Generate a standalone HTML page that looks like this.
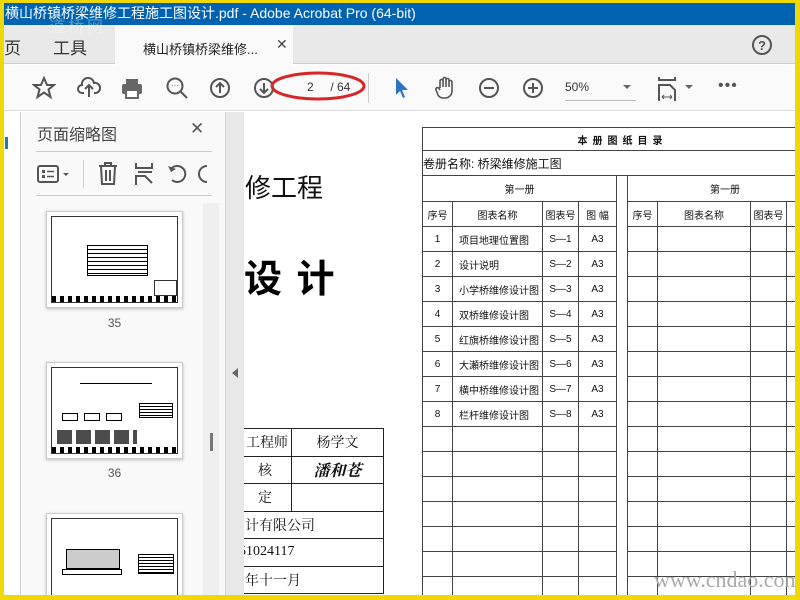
<!DOCTYPE html>
<html><head><meta charset="utf-8"><style>
*{margin:0;padding:0;box-sizing:border-box}
body{width:800px;height:600px;overflow:hidden;background:#f0d800;font-family:"Liberation Sans","Noto Sans CJK SC",sans-serif;position:relative}
.a{position:absolute}
#win{left:4px;top:3px;width:791px;height:592px;background:#fff;overflow:hidden}
#title{left:0;top:0;width:791px;height:22px;background:#0063b1;color:#fff;font-size:14px;line-height:20px;padding-left:1px;white-space:nowrap}
#tabs{left:0;top:22px;width:791px;height:39px;background:#e9e9e9;border-bottom:1px solid #cfcfcf}
#tb{left:0;top:62px;width:791px;height:46px;background:#fafafa;border-bottom:1px solid #ddd}
.ic{stroke:#555;fill:none;stroke-width:2}
table{border-collapse:collapse;table-layout:fixed;font-size:10px;color:#111}
td{border:1px solid #444;text-align:center;height:25px;padding:0;white-space:nowrap;overflow:hidden}
.st td{border:1px solid #222;height:27.5px;font-size:14px;font-family:"Liberation Serif","Noto Serif CJK SC",serif}
.thumb{position:absolute;left:42px;width:137px;background:#fff;border:1px solid #ccc;box-shadow:0 1px 3px rgba(0,0,0,.25)}
.thumb .in{position:absolute;left:4px;top:4px;right:4px;bottom:4px;border:1px solid #333}
.lbl{position:absolute;left:42px;width:137px;text-align:center;font-size:12px;color:#555}
</style></head><body>
<div id="win" class="a">
<div id="title" class="a">横山桥镇桥梁维修工程施工图设计.pdf - Adobe Acrobat Pro (64-bit)</div>
<div id="tabs" class="a">
 <div class="a" style="left:0;top:9px;font-size:17px;color:#333">页</div>
 <div class="a" style="left:49px;top:9px;font-size:17px;color:#333">工具</div>
 <div class="a" style="left:111px;top:0;width:178px;height:40px;background:#fafafa"></div>
 <div class="a" style="left:139px;top:14px;font-size:13px;color:#222">横山桥镇桥梁维修...</div>
 <div class="a" style="left:272px;top:11px;font-size:14px;color:#444">✕</div>
 <svg class="a" style="left:747px;top:9px" width="22" height="22"><circle cx="11" cy="11" r="9" class="ic"/><text x="11" y="16" font-size="13" text-anchor="middle" fill="#555" font-family="Liberation Sans" font-weight="bold">?</text></svg>
</div>
<div id="tb" class="a">
 <svg class="a" style="left:28px;top:11px" width="24" height="24"><polygon points="12,2 15,9 22,9 16.5,13.5 18.5,21 12,16.5 5.5,21 7.5,13.5 2,9 9,9" class="ic"/></svg>
 <svg class="a" style="left:73px;top:12px" width="24" height="22"><path d="M7 16 H5 A4 4 0 0 1 5 8 A6 6 0 0 1 17 6 A4.5 4.5 0 0 1 19 16 H17 M12 20 V9 M8 12 L12 8 L16 12" class="ic"/></svg>
 <svg class="a" style="left:116px;top:12px" width="24" height="22"><rect x="6" y="2" width="12" height="5" fill="#666"/><rect x="2" y="7" width="20" height="10" rx="2" fill="#666"/><rect x="6" y="13" width="12" height="8" fill="#fff" stroke="#666" stroke-width="2"/></svg>
 <svg class="a" style="left:161px;top:11px" width="24" height="24"><circle cx="10" cy="10" r="7.5" class="ic"/><path d="M15.5 15.5 L22 22" class="ic" stroke-width="3"/><text x="10" y="12" font-size="8" text-anchor="middle" fill="#555">···</text></svg>
 <svg class="a" style="left:205px;top:12px" width="22" height="22"><circle cx="11" cy="11" r="9" class="ic"/><path d="M11 16 V6 M7 10 L11 6 L15 10" class="ic"/></svg>
 <svg class="a" style="left:249px;top:12px" width="22" height="22"><circle cx="11" cy="11" r="9" class="ic"/><path d="M11 6 V16 M7 12 L11 16 L15 12" class="ic"/></svg>
 <svg class="a" style="left:264px;top:4px" width="100" height="34"><ellipse cx="50" cy="17" rx="46" ry="13" fill="none" stroke="#d8252a" stroke-width="3"/></svg>
 <div class="a" style="left:303px;top:15px;font-size:12px;color:#333">2&nbsp;&nbsp;&nbsp;&nbsp; / 64</div>
 <div class="a" style="left:364px;top:8px;width:1px;height:30px;background:#ccc"></div>
 <svg class="a" style="left:390px;top:12px" width="16" height="22"><path d="M2 1 L2 18 L6 14 L9 21 L11 20 L8 13 L14 13 Z" fill="#2a73c8"/></svg>
 <svg class="a" style="left:430px;top:10px" width="24" height="26"><path d="M6 13 V6 a1.5 1.5 0 0 1 3 0 V12 V4 a1.5 1.5 0 0 1 3 0 V12 V5 a1.5 1.5 0 0 1 3 0 V12 V7 a1.5 1.5 0 0 1 3 0 V16 a7 7 0 0 1 -7 7 h-2 a6 6 0 0 1 -5 -3 L2 15 a1.5 1.5 0 0 1 3 -1.5 L6 15" fill="none" stroke="#555" stroke-width="1.6"/></svg>
 <svg class="a" style="left:474px;top:12px" width="22" height="22"><circle cx="11" cy="11" r="9" class="ic"/><path d="M6 11 H16" class="ic"/></svg>
 <svg class="a" style="left:518px;top:12px" width="22" height="22"><circle cx="11" cy="11" r="9" class="ic"/><path d="M6 11 H16 M11 6 V16" class="ic"/></svg>
 <div class="a" style="left:561px;top:15px;font-size:12px;color:#333">50%</div>
 <div class="a" style="left:561px;top:35px;width:71px;height:1px;background:#bbb"></div>
 <div class="a" style="left:619px;top:20px;width:0;height:0;border-left:4px solid transparent;border-right:4px solid transparent;border-top:4px solid #666"></div>
 <svg class="a" style="left:654px;top:10px" width="20" height="28"><path d="M1 2 V5 H17 V2" fill="none" stroke="#555" stroke-width="2"/><path d="M1 26 V10 H12 L17 15 V26" fill="none" stroke="#555" stroke-width="2"/><path d="M4 22 H14 M4 22 l2 -2 M4 22 l2 2 M14 22 l-2 -2 M14 22 l-2 2" stroke="#555" fill="none"/></svg>
 <div class="a" style="left:681px;top:20px;width:0;height:0;border-left:4px solid transparent;border-right:4px solid transparent;border-top:4px solid #666"></div>
 <div class="a" style="left:714px;top:12px;font-size:16px;color:#555;letter-spacing:1px">•••</div>
</div>
<div class="a" style="left:0;top:109px;width:17px;height:483px;background:#fff;border-right:1px solid #ccc"></div>
<div class="a" style="left:1px;top:134px;width:3px;height:12px;background:#2a73c8"></div>
<div class="a" style="left:18px;top:109px;width:203px;height:483px;background:#f9f9f9"></div>
<div class="a" style="left:33px;top:118px;font-size:16px;color:#444">页面缩略图</div>
<div class="a" style="left:186px;top:116px;font-size:17px;color:#555">✕</div>
<div class="a" style="left:32px;top:148px;width:176px;height:1px;background:#ccc"></div>
<svg class="a" style="left:33px;top:161px" width="36" height="22"><rect x="1" y="2" width="20" height="16" rx="2" class="ic" stroke-width="1.8"/><rect x="5" y="6" width="3" height="3" fill="#555"/><rect x="5" y="11" width="3" height="3" fill="#555"/><path d="M10 7.5 H17 M10 12.5 H17" stroke="#555" stroke-width="1.5"/><path d="M26 9 L32 9 L29 12 Z" fill="#555"/></svg>
<div class="a" style="left:79px;top:157px;width:1px;height:28px;background:#ccc"></div>
<svg class="a" style="left:92px;top:158px" width="24" height="26"><path d="M3 5 H21 M9 5 V2 H15 V5 M5 5 L6 23 H18 L19 5 M10 9 V20 M14 9 V20" class="ic" stroke-width="1.8"/></svg>
<svg class="a" style="left:130px;top:159px" width="20" height="24"><path d="M2 1 V6 H18 V1 M2 23 V14 H11 L18 21 M4 10 H18" fill="none" stroke="#555" stroke-width="2"/></svg>
<svg class="a" style="left:162px;top:160px" width="22" height="22"><path d="M6 17 A8 8 0 1 0 5 6" class="ic" stroke-width="2.5"/><path d="M2 3 L5 9 L10 6 Z" fill="#555"/></svg>
<svg class="a" style="left:193px;top:160px" width="10" height="22"><path d="M10 3 A8 8 0 0 0 10 19" class="ic" stroke-width="2.5"/></svg>
<div class="a" style="left:32px;top:192px;width:176px;height:1px;background:#ccc"></div>
<div class="a" style="left:199px;top:200px;width:16px;height:392px;background:#efefef"></div>
<div class="a" style="left:206px;top:430px;width:3px;height:18px;background:#777"></div>
<div class="thumb" style="top:208px;height:97px"><div class="in">
 <div class="a" style="left:35px;top:28px;width:61px;height:31px;border:1px solid #000;background:repeating-linear-gradient(#fff 0 3px,#000 3px 4px)"></div>
 <div class="a" style="left:0;bottom:0;width:100%;height:6px;background:repeating-linear-gradient(90deg,#000 0 4px,#fff 4px 8px)"></div>
 <div class="a" style="right:0;bottom:6px;width:23px;height:16px;border:1px solid #333"></div>
</div></div>
<div class="lbl" style="top:313px">35</div>
<div class="thumb" style="top:359px;height:97px"><div class="in">
 <div class="a" style="left:28px;top:15px;width:72px;height:1px;background:#000"></div>
 <div class="a" style="left:10px;top:45px;width:16px;height:8px;border:1px solid #000"></div>
 <div class="a" style="left:32px;top:45px;width:16px;height:8px;border:1px solid #000"></div>
 <div class="a" style="left:54px;top:45px;width:16px;height:8px;border:1px solid #000"></div>
 <div class="a" style="left:5px;top:62px;width:80px;height:14px;background:repeating-linear-gradient(90deg,#000 0 15px,#fff 15px 19px);opacity:.7"></div>
 <div class="a" style="left:87px;top:35px;width:34px;height:15px;border:1px solid #000;background:repeating-linear-gradient(#fff 0 2px,#000 2px 3px)"></div>
 <div class="a" style="left:0;bottom:0;width:100%;height:6px;background:repeating-linear-gradient(90deg,#000 0 4px,#fff 4px 8px)"></div>
</div></div>
<div class="lbl" style="top:463px">36</div>
<div class="thumb" style="top:510px;height:97px"><div class="in">
 <div class="a" style="left:14px;top:30px;width:54px;height:20px;border:1px solid #000;background:#ccc"></div>
 <div class="a" style="left:10px;top:50px;width:60px;height:6px;border:1px solid #000"></div>
 <div class="a" style="left:86px;top:35px;width:36px;height:20px;border:1px solid #000;background:repeating-linear-gradient(#fff 0 2px,#000 2px 3px)"></div>
</div></div>
<div class="a" style="left:221px;top:109px;width:19px;height:483px;background:#e8e8e8;border-left:1px solid #d4d4d4"></div>
<div class="a" style="left:228px;top:365px;width:0;height:0;border-top:5px solid transparent;border-bottom:5px solid transparent;border-right:6px solid #666"></div>
<div class="a" style="left:240px;top:109px;width:551px;height:483px;background:#fff;overflow:hidden">
 <div class="a" style="left:1px;top:56px;font-size:26px;color:#111">修工程</div>
 <div class="a" style="left:0;top:136px;font-size:38px;font-weight:bold;color:#000;letter-spacing:2px">设 计</div>
 <table class="st a" style="left:-50px;top:316px;width:189px">
  <col style="width:97px"><col style="width:92px">
  <tr><td style="text-align:right;padding-right:3px">工程师</td><td>杨学文</td></tr>
  <tr><td style="text-align:right;padding-right:19px">核</td><td style="font-weight:bold;font-size:16px;font-style:italic">潘和苍</td></tr>
  <tr><td style="text-align:right;padding-right:19px">定</td><td></td></tr>
  <tr><td colspan="2" style="text-align:left;padding-left:50px">计有限公司</td></tr>
  <tr><td colspan="2" style="text-align:left;padding-left:44px">51024117</td></tr>
  <tr><td colspan="2" style="text-align:left;padding-left:50px">年十一月</td></tr>
 </table>
 <table class="a" style="left:178px;top:15px;width:400px">
  <col style="width:30px"><col style="width:90px"><col style="width:36px"><col style="width:38px"><col style="width:11px"><col style="width:30px"><col style="width:93px"><col style="width:36px"><col style="width:36px">
  <tr style="height:23px"><td colspan="9" style="height:23px;font-weight:bold;letter-spacing:5px">本册图纸目录</td></tr>
  <tr><td colspan="9" style="text-align:left;font-size:12px">卷册名称: 桥梁维修施工图</td></tr>
  <tr style="height:26px"><td colspan="4">第一册</td><td rowspan="20"></td><td colspan="4">第一册</td></tr>
  <tr><td>序号</td><td>图表名称</td><td>图表号</td><td>图 幅</td><td>序号</td><td>图表名称</td><td>图表号</td><td>图</td></tr>
  <tr><td>1</td><td style="text-align:left;padding-left:6px">项目地理位置图</td><td>S—1</td><td>A3</td><td></td><td></td><td></td><td></td></tr>
  <tr><td>2</td><td style="text-align:left;padding-left:6px">设计说明</td><td>S—2</td><td>A3</td><td></td><td></td><td></td><td></td></tr>
  <tr><td>3</td><td style="text-align:left;padding-left:6px">小学桥维修设计图</td><td>S—3</td><td>A3</td><td></td><td></td><td></td><td></td></tr>
  <tr><td>4</td><td style="text-align:left;padding-left:6px">双桥维修设计图</td><td>S—4</td><td>A3</td><td></td><td></td><td></td><td></td></tr>
  <tr><td>5</td><td style="text-align:left;padding-left:6px">红旗桥维修设计图</td><td>S—5</td><td>A3</td><td></td><td></td><td></td><td></td></tr>
  <tr><td>6</td><td style="text-align:left;padding-left:6px">大瀬桥维修设计图</td><td>S—6</td><td>A3</td><td></td><td></td><td></td><td></td></tr>
  <tr><td>7</td><td style="text-align:left;padding-left:6px">横中桥维修设计图</td><td>S—7</td><td>A3</td><td></td><td></td><td></td><td></td></tr>
  <tr><td>8</td><td style="text-align:left;padding-left:6px">栏杆维修设计图</td><td>S—8</td><td>A3</td><td></td><td></td><td></td><td></td></tr>
  <tr><td></td><td></td><td></td><td></td><td></td><td></td><td></td><td></td></tr>
  <tr><td></td><td></td><td></td><td></td><td></td><td></td><td></td><td></td></tr>
  <tr><td></td><td></td><td></td><td></td><td></td><td></td><td></td><td></td></tr>
  <tr><td></td><td></td><td></td><td></td><td></td><td></td><td></td><td></td></tr>
  <tr><td></td><td></td><td></td><td></td><td></td><td></td><td></td><td></td></tr>
  <tr><td></td><td></td><td></td><td></td><td></td><td></td><td></td><td></td></tr>
  <tr><td></td><td></td><td></td><td></td><td></td><td></td><td></td><td></td></tr>
 </table>
 <div class="a" style="left:410px;top:455px;font-size:22px;color:#aaa;font-family:'Liberation Serif',serif">www.cndao.com</div>
</div>
<div class="a" style="left:45px;top:10px;font-size:16px;color:rgba(255,255,255,.35);letter-spacing:3px">道桥网</div>
</div>
</body></html>
